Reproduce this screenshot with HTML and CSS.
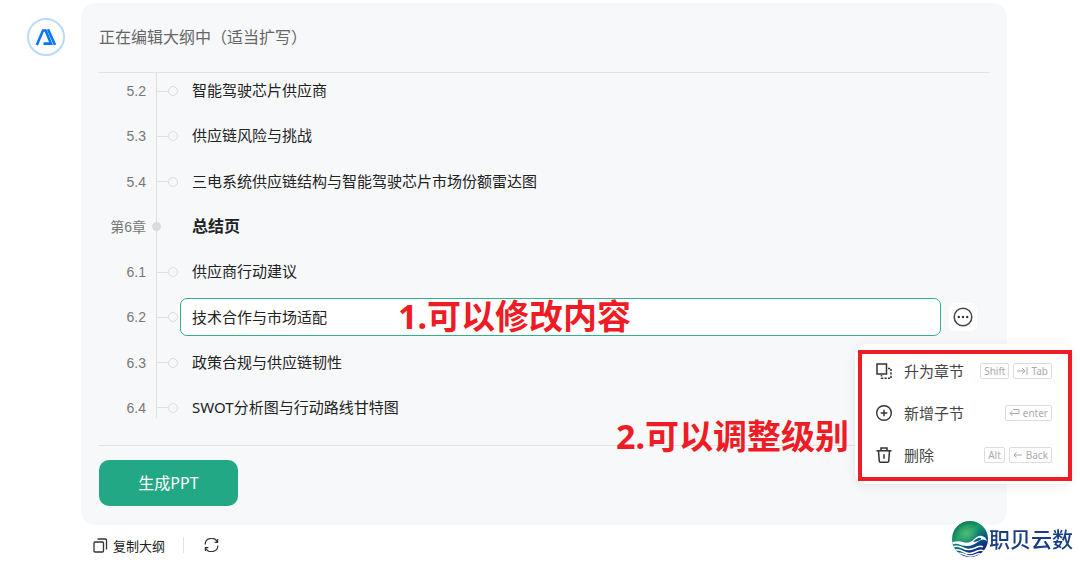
FILE: index.html
```html
<!DOCTYPE html>
<html lang="zh-CN">
<head>
    <meta charset="UTF-8">
    <meta name="viewport" content="width=device-width, initial-scale=1.0">
    <title>编辑大纲</title>
    <link rel="stylesheet" href="styles.css">
</head>
<body>

<main class="message">
    <div class="avatar">
        <svg width="22" height="18" viewBox="0 0 22 18" fill="none" stroke="#0a75ff" stroke-width="2.6">
            <path d="M1.800 17 8 2.500h2.600L16 15.600H8.500"/>
            <path d="M13 1.200 20 17"/>
        </svg>
    </div>
    <div class="content">
        <section class="card">
            <h1 class="card-title">正在编辑大纲中（适当扩写）</h1>

            <ol class="outline">
                <li class="row"><span class="number">5.2</span><span class="node"></span><span class="text">智能驾驶芯片供应商</span></li>
                <li class="row"><span class="number">5.3</span><span class="node"></span><span class="text">供应链风险与挑战</span></li>
                <li class="row"><span class="number">5.4</span><span class="node"></span><span class="text">三电系统供应链结构与智能驾驶芯片市场份额雷达图</span></li>
                <li class="row chapter"><span class="number">第6章</span><span class="node"></span><span class="text">总结页</span></li>
                <li class="row"><span class="number">6.1</span><span class="node"></span><span class="text">供应商行动建议</span></li>
                <li class="row active">
                    <label class="number" for="section62">6.2</label><span class="node"></span>
                    <input class="edit" id="section62" type="text" value="技术合作与市场适配">
                    <button class="more" type="button" aria-label="更多">
                        <svg width="20" height="20" viewBox="0 0 20 20" fill="none" stroke="#444" stroke-width="1.5">
                            <circle cx="10" cy="10" r="8.8"/>
                            <g fill="#333" stroke="none"><circle cx="5.8" cy="10" r="1.2"/><circle cx="10" cy="10" r="1.2"/><circle cx="14.2" cy="10" r="1.2"/></g>
                        </svg>
                    </button>
                    <strong class="note note-edit">1.可以修改内容</strong>
                    <div class="menu">
                        <button class="menu-item" type="button">
                            <svg width="16" height="16" viewBox="0 0 16 16" fill="none" stroke="#333" stroke-width="1.5">
                                <path d="M1 1h9.5v10H1z"/>
                                <path d="M12 5.5h3v9.7H5.5V12" stroke-dasharray="2.2 1.2"/>
                            </svg>
                            <span class="menu-label">升为章节</span>
                            <span class="keys">
                                <kbd>Shift</kbd>
                                <kbd><svg width="11" height="10" viewBox="0 0 11 10"><path d="M0 5h8M5 2l3 3-3 3M10 1v8"/></svg>Tab</kbd>
                            </span>
                        </button>
                        <button class="menu-item" type="button">
                            <svg width="16" height="16" viewBox="0 0 16 16" fill="none" stroke="#333" stroke-width="1.4">
                                <circle cx="8" cy="8" r="7.3"/>
                                <path d="M8 4.7v6.6M4.7 8h6.6"/>
                            </svg>
                            <span class="menu-label">新增子节</span>
                            <span class="keys">
                                <kbd><svg width="11" height="10" viewBox="0 0 11 10"><path d="M4 1.5h6v4H1M3.5 3 1 5.5 3.5 8"/></svg>enter</kbd>
                            </span>
                        </button>
                        <button class="menu-item" type="button">
                            <svg width="16" height="16" viewBox="0 0 16 16" fill="none" stroke="#333" stroke-width="1.5">
                                <path d="M.5 3.8h15M5 3.5V.9h6v2.6M2.5 4l.8 10.2q.1 1 1.1 1h7.2q1 0 1.1-1L13.5 4M8 7.2v4.6"/>
                            </svg>
                            <span class="menu-label">删除</span>
                            <span class="keys">
                                <kbd>Alt</kbd>
                                <kbd><svg width="10" height="10" viewBox="0 0 10 10"><path d="M9 5H1M3.5 2.5 1 5l2.5 2.5"/></svg>Back</kbd>
                            </span>
                        </button>
                    </div>
                </li>
                <li class="row"><span class="number">6.3</span><span class="node"></span><span class="text">政策合规与供应链韧性</span></li>
                <li class="row"><span class="number">6.4</span><span class="node"></span><span class="text">SWOT分析图与行动路线甘特图</span></li>
            </ol>

            <div class="card-footer">
                <button class="generate" type="button">生成PPT</button>
            </div>
            <strong class="note note-level">2.可以调整级别</strong>
        </section>

        <div class="toolbar">
            <button class="tool" type="button">
                <svg width="15" height="15" viewBox="0 0 15 15" fill="none" stroke="#333" stroke-width="1.3">
                    <rect x="1" y="4" width="9.5" height="10" rx="1"/>
                    <path d="M4.5 1h8q1 0 1 1v9.5"/>
                </svg>
                复制大纲
            </button>
            <span class="divider"></span>
            <button class="tool" type="button" aria-label="重新生成">
                <svg width="16" height="14" viewBox="0 0 16 14" fill="none" stroke="#333" stroke-width="1.2">
                    <path d="M1.2 6.5A6.3 6 0 0 1 13.3 4M13.8 7.5A6.3 6 0 0 1 1.700 10"/>
                    <path d="M13.600 1v3.400h-3M1.400 13V9.600h3"/>
                </svg>
            </button>
        </div>
    </div>
</main>

<div class="brand">
    <svg width="38" height="38" viewBox="0 0 38 38">
        <defs>
            <linearGradient id="sky" x1=".2" y1="0" x2=".8" y2="1">
                <stop offset="0" stop-color="#00694c"/>
                <stop offset=".35" stop-color="#179a6b"/>
                <stop offset=".6" stop-color="#086080"/>
                <stop offset=".8" stop-color="#0c2d86"/>
                <stop offset="1" stop-color="#101c78"/>
            </linearGradient>
            <radialGradient id="glow" cx=".4" cy=".35" r=".35">
                <stop offset="0" stop-color="#4fbd72"/>
                <stop offset="1" stop-color="#4fbd72" stop-opacity="0"/>
            </radialGradient>
            <clipPath id="globe"><circle cx="19" cy="19" r="18"/></clipPath>
        </defs>
        <circle cx="19" cy="19" r="18" fill="url(#sky)"/>
        <circle cx="19" cy="19" r="18" fill="url(#glow)"/>
        <g clip-path="url(#globe)" fill="none" stroke="#fff" stroke-width="1.5">
            <path d="M0 23q6-3 12-1 5 2 9-1 6-6 10-5 4 1 5 5-4-3-8 0-6 5-12 5-5 0-9-2-4-1-8 1z" fill="#fff" stroke="none"/>
            <path d="M22 22q5-5 8-4 1 1-1 2-3 2-7 2z" fill="#075a86" stroke="none"/>
            <path d="M1 27q6-2 11 1t12 0q5-3 8-1"/>
            <path d="M2 30q6-1 11 2t11 0q5-3 9-1"/>
            <path d="M6 33q5 0 9 2t9 0q4-2 7-1"/>
        </g>
    </svg>
    <span>职贝云数</span>
</div>

</body>
</html>
```
FILE: styles.css
```css
*, *::before, *::after {
    box-sizing: border-box;
}
body {
    margin: 0;
    background-color: #fff;
    color: #222;
    font-family: "Noto Sans", "Noto Sans CJK SC", sans-serif;
    font-size: 15px;
    overflow-x: hidden;
}
button {
    padding: 0;
    border: none;
    background: none;
    color: inherit;
    font: inherit;
    cursor: pointer;
}
svg {
    display: block;
    flex: none;
}
.message {
    display: flex;
    gap: 16px;
    padding: 3px 73px 0 27px;
}
.avatar {
    display: flex;
    align-items: center;
    justify-content: center;
    flex: none;
    width: 38px;
    height: 38px;
    margin-top: 15px;
    border: 2px solid #b9dafe;
    border-radius: 50%;
}
.content {
    flex: 1;
    min-width: 0;
}
.card {
    position: relative;
    padding: 0 18px 19px;
    border-radius: 14px;
    background-color: #f7f8fa;
}
.card-title {
    margin: 0;
    padding: 22px 0 23px;
    border-bottom: 1px solid #e2e3e5;
    color: #666;
    font-size: 16px;
    font-weight: 400;
    line-height: 24px;
}

/* outline tree */
.outline {
    position: relative;
    display: flex;
    flex-direction: column;
    justify-content: space-between;
    min-height: 353px;
    margin: 0 0 19px;
    padding: 0 12px 0 0;
    list-style: none;
}
.outline::before {
    content: "";
    position: absolute;
    top: 0;
    bottom: 8px;
    left: 57px;
    width: 1px;
    background-color: #e0e0e0;
}
.row {
    position: relative;
    display: flex;
    align-items: center;
    height: 36px;
}
.number {
    width: 47px;
    color: #777;
    font-family: "Liberation Sans", "Noto Sans CJK SC", sans-serif;
    font-size: 14px;
    line-height: 20px;
    text-align: right;
    white-space: nowrap;
}
.node {
    display: flex;
    align-items: center;
    width: 21px;
    margin-left: 11px;
}
.node::before {
    content: "";
    flex: 1;
    height: 1px;
    background-color: #e0e0e0;
}
.node::after {
    content: "";
    width: 10px;
    height: 10px;
    border: 1px solid #dcdcdc;
    border-radius: 50%;
}
.chapter .node::before {
    display: none;
}
.chapter .node::after {
    margin-left: -5px;
    width: 9px;
    height: 9px;
    background-color: #dcdcdc;
}
.text {
    margin-left: 14px;
    padding-bottom: 2px;
    line-height: 24px;
}
.chapter .text {
    font-size: 16px;
    font-weight: 700;
}
.active {
    z-index: 2;
}
.edit {
    flex: 1;
    min-width: 0;
    height: 38px;
    margin-left: 2px;
    padding: 0 11px 2px;
    border: 1px solid #35af8b;
    border-radius: 7px;
    outline: none;
    background-color: #fff;
    color: #222;
    font: inherit;
}
.more {
    display: flex;
    align-items: center;
    justify-content: center;
    width: 28px;
    height: 28px;
    margin-left: 8px;
    border-radius: 6px;
    background-color: #fff;
}

/* row menu */
.menu {
    position: absolute;
    top: 45px;
    right: -95px;
    width: 217px;
    padding: 6px 20px 8px 21px;
    border-radius: 12px;
    background-color: #fff;
    box-shadow: 0 2px 12px rgba(0, 0, 0, 0.08);
}
.menu::after {
    content: "";
    position: absolute;
    inset: 6px 0 3px 3px;
    border: 4px solid #ee1c25;
    pointer-events: none;
}
.menu-item {
    display: flex;
    align-items: center;
    gap: 12px;
    width: 100%;
    height: 42px;
    color: #444;
}
.menu-label {
    padding-bottom: 2px;
}
.keys {
    display: flex;
    gap: 4px;
    margin-left: auto;
}
kbd {
    display: flex;
    align-items: center;
    gap: 3px;
    height: 16px;
    padding: 0 3px;
    border: 1px solid #ddd;
    border-radius: 2px;
    color: #aaa;
    font-family: "Noto Sans", sans-serif;
    font-size: 10px;
}
kbd svg {
    fill: none;
    stroke: #aaa;
}

.card-footer {
    padding-top: 14px;
    border-top: 1px solid #e2e3e5;
}
.generate {
    min-width: 139px;
    height: 46px;
    padding-bottom: 2px;
    border-radius: 10px;
    background-color: #22a884;
    color: #fff;
    font-size: 16px;
}

/* red tutorial notes */
.note {
    position: absolute;
    color: #ee1c25;
    font-size: 34px;
    line-height: 40px;
    white-space: nowrap;
}
.note-edit {
    top: -3px;
    left: 299px;
}
.note-level {
    top: 413px;
    left: 535px;
}

.toolbar {
    display: flex;
    align-items: center;
    height: 40px;
    padding-left: 12px;
}
.tool {
    display: flex;
    align-items: center;
    gap: 5px;
    font-size: 13px;
}
.divider {
    width: 1px;
    height: 16px;
    margin: 0 20px 0 18px;
    background-color: #e4e4e4;
}
.brand {
    position: fixed;
    right: 7px;
    bottom: 6px;
    display: flex;
    align-items: center;
    color: #173f86;
    font-size: 21px;
    font-weight: 500;
    line-height: 30px;
}
```
